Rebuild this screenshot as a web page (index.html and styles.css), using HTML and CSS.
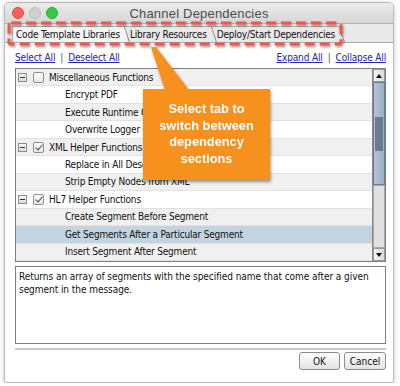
FILE: index.html
```html
<!DOCTYPE html>
<html>
<head>
<meta charset="utf-8">
<link rel="stylesheet" href="styles.css">
</head>
<body>
<div class="window">
  <div class="titlebar">
    <div class="lights">
      <span class="light red"></span>
      <span class="light grey"></span>
      <span class="light green"></span>
    </div>
    <div class="title">Channel Dependencies</div>
  </div>
  <div class="tabs">
    <div class="tab active">Code Template Libraries</div>
    <div class="tab">Library Resources</div>
    <div class="tab">Deploy/Start Dependencies</div>
  </div>
  <div class="panel">
    <div class="links">
      <div class="linkgroup"><a class="link">Select All</a><span class="sep">|</span><a class="link">Deselect All</a></div>
      <div class="linkgroup"><a class="link">Expand All</a><span class="sep">|</span><a class="link">Collapse All</a></div>
    </div>
    <div class="tree">
      <div class="rows">
        <div class="row group odd"><span class="toggle"></span><span class="check"></span><span class="label">Miscellaneous Functions</span></div>
        <div class="row child"><span class="label">Encrypt PDF</span></div>
        <div class="row child odd"><span class="label">Execute Runtime Command</span></div>
        <div class="row child"><span class="label">Overwrite Logger Configuration</span></div>
        <div class="row group odd"><span class="toggle"></span><span class="check checked"></span><span class="label">XML Helper Functions</span></div>
        <div class="row child"><span class="label">Replace in All Descendants</span></div>
        <div class="row child odd"><span class="label">Strip Empty Nodes from XML</span></div>
        <div class="row group"><span class="toggle"></span><span class="check checked"></span><span class="label">HL7 Helper Functions</span></div>
        <div class="row child odd"><span class="label">Create Segment Before Segment</span></div>
        <div class="row child selected"><span class="label">Get Segments After a Particular Segment</span></div>
        <div class="row child odd"><span class="label">Insert Segment After Segment</span></div>
      </div>
      <div class="scrollbar">
        <div class="sbtn up"><span class="arrow-up"></span></div>
        <div class="thumb"><div class="grip"></div></div>
        <div class="track"></div>
        <div class="sbtn down"><span class="arrow-down"></span></div>
      </div>
    </div>
    <div class="desc">Returns an array of segments with the specified name that come after a given segment in the message.</div>
    <div class="separator"></div>
    <div class="buttons">
      <button class="btn ok">OK</button>
      <button class="btn cancel">Cancel</button>
    </div>
  </div>

  <svg class="highlight" width="342" height="30" viewBox="0 0 342 30">
    <defs>
      <filter id="sh" x="-5%" y="-30%" width="110%" height="160%">
        <feDropShadow dx="1" dy="1.5" stdDeviation="1" flood-color="#000" flood-opacity="0.45"/>
      </filter>
    </defs>
    <rect x="3" y="3" width="332" height="21" rx="2" fill="none" stroke="#ec5848" stroke-width="3" stroke-dasharray="10 5" filter="url(#sh)"/>
  </svg>

  <div class="callout">
    <div class="callout-tip"></div>
    <div class="callout-box">Select tab to<br>switch between<br>dependency<br>sections</div>
  </div>
</div>
</body>
</html>
```
FILE: styles.css
```css
* { box-sizing: border-box; }

body {
  margin: 0;
  background: #ffffff;
  font-family: "DejaVu Sans Condensed", "DejaVu Sans", sans-serif;
  font-stretch: condensed;
}

.window {
  position: relative;
  margin: 2px 0 0 4px;
  width: 390px;
  height: 381px;
  border: 1px solid #b9b9b9;
  border-radius: 5px 5px 3px 3px;
  background: #ffffff;
  box-shadow: 0 1px 5px rgba(0, 0, 0, 0.22);
  display: flex;
  flex-direction: column;
}

.titlebar {
  height: 21px;
  flex: none;
  display: flex;
  align-items: center;
  position: relative;
  background: linear-gradient(#ebebeb, #d6d6d6);
  border-bottom: 1px solid #b3b3b3;
  border-radius: 4px 4px 0 0;
}

.lights {
  display: flex;
  gap: 5px;
  padding-left: 7px;
}

.light {
  width: 12px;
  height: 12px;
  border-radius: 50%;
  display: block;
}
.light.red { background: #fc5f57; border: 1px solid #de4a41; }
.light.grey { background: #d0d0d0; border: 1px solid #bcbcbc; }
.light.green { background: #35c94a; border: 1px solid #24a935; }

.title {
  position: absolute;
  left: 0;
  right: 0;
  text-align: center;
  font-family: "Liberation Sans", Arial, sans-serif;
  font-stretch: normal;
  font-size: 13px;
  color: #4c4c4c;
  letter-spacing: 0.2px;
}

.tabs {
  height: 19px;
  flex: none;
  display: flex;
  align-items: flex-end;
  padding-left: 7px;
  background: #e9e9e9;
  border-bottom: 1px solid #a9a9a9;
}

.tab {
  position: relative;
  height: 16px;
  line-height: 15px;
  padding: 0 7px 0 3px;
  font-size: 10px;
  letter-spacing: -0.2px;
  color: #111;
  border-top: 1px solid #b0b0b0;
}
.tab:first-child { border-left: 1px solid #b0b0b0; }
.tab::after {
  content: "";
  position: absolute;
  right: 2px;
  top: 0;
  height: 15px;
  border-right: 1px solid #8c8c8c;
  transform: skewX(18deg);
  transform-origin: top;
}
.tab.active { background: #f4f4f4; }

.panel {
  flex: 1;
  display: flex;
  flex-direction: column;
  padding: 8px 7px 0 10px;
  background: #ffffff;
  border-radius: 0 0 3px 3px;
}

.links {
  display: flex;
  justify-content: space-between;
  height: 14px;
  line-height: 14px;
  font-size: 10px;
  letter-spacing: -0.15px;
  margin-bottom: 3px;
}
.linkgroup { display: flex; gap: 5px; }
.link { color: #2323b8; text-decoration: underline; }
.sep { color: #555; }

.tree {
  height: 194px;
  flex: none;
  display: flex;
  border: 1px solid #7d7d7d;
}

.rows {
  flex: 1;
  display: flex;
  flex-direction: column;
}

.row {
  height: 17.5px;
  display: flex;
  align-items: center;
  font-size: 10px;
  letter-spacing: -0.2px;
  color: #111;
  background: #ffffff;
  border-bottom: 1px solid #e2e2e2;
  white-space: nowrap;
  overflow: hidden;
}
.row.odd { background: #f0f0f0; }
.row.selected { background: #c3d4e1; }
.row.child { padding-left: 49px; }
.row.group { padding-left: 2px; }

.toggle {
  width: 9px;
  height: 9px;
  border: 1px solid #8d8d8d;
  background: linear-gradient(#f6f6f6, #dcdcdc);
  position: relative;
  margin-right: 6px;
}
.toggle::after {
  content: "";
  position: absolute;
  left: 1px;
  right: 1px;
  top: 3px;
  height: 1px;
  background: #333;
}

.check {
  width: 11px;
  height: 11px;
  border: 1px solid #8e8e8e;
  border-radius: 2px;
  background: linear-gradient(#fdfdfd, #e8e8e8);
  margin-right: 5px;
  position: relative;
}
.check.checked::after {
  content: "";
  position: absolute;
  left: 3px;
  top: 0px;
  width: 3px;
  height: 6px;
  border-right: 1.5px solid #4a4a4a;
  border-bottom: 1.5px solid #4a4a4a;
  transform: rotate(40deg);
}

.scrollbar {
  width: 13px;
  flex: none;
  display: flex;
  flex-direction: column;
  border-left: 1px solid #8a8a8a;
  background: #e0e0e0;
}
.sbtn {
  height: 13px;
  flex: none;
  display: flex;
  align-items: center;
  justify-content: center;
  background: linear-gradient(90deg, #f4f4f4, #dadada);
  border: 1px solid #9a9a9a;
}
.arrow-up {
  width: 0; height: 0;
  border-left: 3.5px solid transparent;
  border-right: 3.5px solid transparent;
  border-bottom: 4px solid #111;
}
.arrow-down {
  width: 0; height: 0;
  border-left: 3.5px solid transparent;
  border-right: 3.5px solid transparent;
  border-top: 4px solid #111;
}
.thumb {
  height: 103px;
  flex: none;
  display: flex;
  align-items: center;
  justify-content: center;
  background: linear-gradient(90deg, #b4c4d8, #9cafc6);
  border: 1px solid #687a94;
}
.grip {
  width: 8px;
  height: 34px;
  background-image: radial-gradient(circle, #6a7990 0.7px, transparent 0.9px);
  background-size: 2px 2px;
}
.track {
  flex: 1;
  background: #e0e0e0;
  border: 1px solid #a8a8a8;
}

.desc {
  margin-top: 4px;
  height: 78px;
  flex: none;
  border: 1px solid #7d7d7d;
  padding: 3px 3px;
  font-size: 10px;
  letter-spacing: -0.05px;
  line-height: 13px;
  color: #111;
}

.separator {
  margin-top: 4px;
  height: 2px;
  flex: none;
  background: #c8c8c8;
}

.buttons {
  display: flex;
  justify-content: flex-end;
  gap: 4px;
  margin-top: 2px;
}
.btn {
  height: 18px;
  padding: 0;
  font-family: inherit;
  font-stretch: condensed;
  font-size: 10px;
  color: #111;
  background: linear-gradient(#ffffff, #e3e3e3);
  border: 1px solid #8c8c8c;
  border-radius: 3px;
}
.btn.ok { width: 41px; }
.btn.cancel { width: 42px; }

.highlight {
  position: absolute;
  left: 1px;
  top: 17px;
}

.callout {
  position: absolute;
  left: 138px;
  top: 44px;
  width: 127px;
  height: 133px;
  filter: drop-shadow(1.5px 2px 1.5px rgba(0, 0, 0, 0.4));
}
.callout-tip {
  position: absolute;
  left: 0;
  top: 0;
  width: 50px;
  height: 43px;
  background: #f7911d;
  clip-path: polygon(8px 0, 13px 0, 46px 43px, 22px 43px);
}
.callout-box {
  position: absolute;
  left: 0;
  top: 42px;
  width: 127px;
  height: 91px;
  background: #f7911d;
  color: #ffffff;
  font-family: "Liberation Sans", Arial, sans-serif;
  font-stretch: normal;
  font-weight: bold;
  font-size: 12.8px;
  line-height: 16.5px;
  text-align: center;
  padding-top: 12px;
}
```
